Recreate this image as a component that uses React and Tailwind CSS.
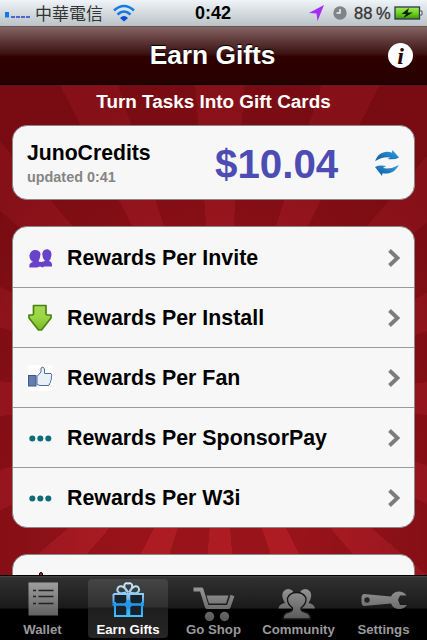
import React, { useState } from 'react';

const InviteIcon = () => (
  <svg className="w-[26px] h-[26px]" viewBox="0 0 26 26" fill="#6842c8">
    <path d="M2.500 22.500 Q1.500 18 6 17 Q2 14 2.500 10 Q4 4.500 9 5 Q13 5.500 13.500 9 Q13 14 11.500 16.500 L14.500 17 L18 16 Q14.500 12 15.500 7.500 Q17 4 20.500 4.200 Q24.500 5 24.500 10 Q24 14 22 16 Q25.500 17 25 21.500 L17 21.500 L16 22.500 L13 21.500 L10 22.500 Z" />
  </svg>
);

const InstallIcon = () => (
  <svg className="w-[26px] h-[28px]" viewBox="0 0 26 28">
    <defs>
      <linearGradient id="arrow" x1="0" y1="0" x2="0" y2="1">
        <stop offset="0" stopColor="#a2d950" />
        <stop offset=".5" stopColor="#9bd444" />
        <stop offset="1" stopColor="#76bb27" />
      </linearGradient>
    </defs>
    <path d="M6.500 1.500 H19 V10 L20 11 H24 V14 L14.500 26 H11.500 L2 14 V11 H5.500 L6.500 10 Z" fill="url(#arrow)" stroke="#4a8410" strokeWidth="1.700" strokeLinejoin="round" />
  </svg>
);

const FanIcon = () => (
  <svg className="w-[26px] h-[26px]" viewBox="0 0 26 26">
    <rect width="26" height="26" rx="4" fill="#fff" />
    <rect x="1.500" y="10.500" width="7.500" height="10.500" fill="#647cb0" stroke="#3f568e" />
    <path d="M10 11.500 L14 7 V3 Q16 .5 17.500 4 V8.500 H24 Q25.500 10 24.300 12 Q25 14 23.700 15.500 Q24 17.500 22.700 18.500 Q22.500 20.500 21 20.500 H13 L10 19.500 Z" fill="#e9f0f8" stroke="#526b9d" strokeLinejoin="round" />
  </svg>
);

const DotsIcon = () => (
  <svg className="w-[26px] h-[26px]" viewBox="0 0 26 26" fill="#0d6c79">
    <circle cx="5.300" cy="13.500" r="3" />
    <circle cx="13.300" cy="13.500" r="3" />
    <circle cx="21.300" cy="13.500" r="3" />
  </svg>
);

const RefreshIcon = () => (
  <svg className="w-[26px] h-[28px]" viewBox="0 0 26 28">
    <defs>
      <linearGradient id="sync" x1="0" y1="1" x2="1" y2="0">
        <stop offset="0" stopColor="#11549e" />
        <stop offset="1" stopColor="#32a4e0" />
      </linearGradient>
    </defs>
    <path d="M1 12 Q4 4 11 3 Q15 2.300 18 3.800 L18.500 1 L25 8.500 Q21 11.200 13.500 10 L16.500 8.500 Q9 7 1 12 Z" fill="url(#sync)" />
    <path d="M25 16 Q21 23 15 24.200 Q12 25 8.500 24.200 L8 27 L1 18 Q5 15.800 12 17 L9 19 Q17 20.500 25 16 Z" fill="url(#sync)" />
  </svg>
);

const WalletIcon = () => (
  <svg className="w-11 h-10" viewBox="0 0 44 40">
    <path d="M7.500 4.500 H37 V37.500 H7.500 Z" fill="url(#gray)" />
    <g stroke="#222" strokeWidth="1.700">
      <path d="M12 12.500 h3 M17.500 12.500 h15 M12 18.500 h3 M17.500 18.500 h15 M12 25.500 h3 M17.500 25.500 h15" />
    </g>
  </svg>
);

const GiftIcon = () => (
  <svg className="w-11 h-10" viewBox="0 0 44 40">
    <defs>
      <linearGradient id="blue" x1="0" y1="0" x2="0" y2="40" gradientUnits="userSpaceOnUse">
        <stop offset=".1" stopColor="#d9eeff" />
        <stop offset=".5" stopColor="#78bdf0" />
        <stop offset=".65" stopColor="#1b9af0" />
        <stop offset="1" stopColor="#49c6ff" />
      </linearGradient>
    </defs>
    <path d="M8 16 H37 V38 H8 Z" fill="#17222b" />
    <g fill="none" stroke="url(#blue)">
      <path d="M20 14.500 C13 17 9.500 13 12.500 9 C16 7 20 10 22 14.500 C16 8 18.500 4 22 5.500 C26 4 28.500 8 23 14.500 C25 10 29 7 32 9 C35 13 31 17 24 14.500" strokeWidth="2" />
      <path d="M7.500 16 H37 V25 M7.500 16 V25" strokeWidth="2" />
      <path d="M9 24 V38 H36 V24" strokeWidth="2" />
      <path d="M6.500 26.500 H38" strokeWidth="2.500" />
      <path d="M22.300 15 V38" strokeWidth="4" />
    </g>
    <path d="M22.300 21.500 L27 26.500 L22.300 31.500 L17.500 26.500 Z" fill="#2795e5" />
  </svg>
);

const CartIcon = () => (
  <svg className="w-11 h-10" viewBox="0 0 44 40">
    <path d="M1.500 11.500 H9.500 L15 29 H36.500 L40.500 17.500" fill="none" stroke="url(#gray)" strokeWidth="4" strokeLinejoin="round" />
    <path d="M14.500 17.500 H36.500 L34 25.500 H17 Z" fill="url(#gray)" />
    <circle cx="17.500" cy="38.500" r="4.700" fill="url(#gray)" />
    <circle cx="32.500" cy="38.500" r="4.700" fill="url(#gray)" />
  </svg>
);

const CommunityIcon = () => (
  <svg className="w-11 h-10" viewBox="0 0 44 40" fill="url(#gray)">
    <path d="M1.500 30.500 Q2 26 8 25 Q4 19 6 14 Q10 8.500 16 13 L15 30.500 Z" />
    <path d="M38 30.500 Q37.500 26 31.500 25 Q35.500 19 33.500 14 Q29.500 8.500 23.500 13 L24.500 30.500 Z" />
    <path d="M6 41 Q6 35 12 34 Q16 33 15.500 30 Q10 26 10.500 20 Q13 14.500 19.500 14.500 Q26.500 14.500 29 20 Q29.500 26 24 30 Q23.500 33 27.500 34 Q33.500 35 33.500 41 Z" stroke="#151515" strokeWidth="1.300" />
  </svg>
);

const SettingsIcon = () => (
  <svg className="w-[48px] h-10" viewBox="0 0 48 40">
    <path d="M4 16 Q1 16.500 1.500 22 Q1 27.500 4 28 L31 25.500 Q33 31 40 31 Q45 30.500 46.800 27 H40 L38 22 L40 17.500 H46.500 Q44 13.500 38.500 13.500 Q33 14 31 18.500 Z" fill="url(#gray)" />
    <circle cx="7" cy="22" r="2.700" fill="#222" />
  </svg>
);

const rewards = [
  { name: 'Rewards Per Invite', icon: <InviteIcon /> },
  { name: 'Rewards Per Install', icon: <InstallIcon /> },
  { name: 'Rewards Per Fan', icon: <FanIcon /> },
  { name: 'Rewards Per SponsorPay', icon: <DotsIcon /> },
  { name: 'Rewards Per W3i', icon: <DotsIcon /> },
];

const tabs = [
  { name: 'Wallet', icon: <WalletIcon /> },
  { name: 'Earn Gifts', icon: <GiftIcon /> },
  { name: 'Go Shop', icon: <CartIcon /> },
  { name: 'Community', icon: <CommunityIcon /> },
  { name: 'Settings', icon: <SettingsIcon /> },
];

const StatusBar = () => (
  <div className="h-[26px] shrink-0 flex items-center bg-linear-to-b from-[#eef4f7] to-[#bbc3c6] text-[#333]">
    <svg className="w-[26px] h-3 ml-[5px] mt-[9px]" viewBox="0 0 26 12">
      <path d="M0 0 h4 v5.500 h-4 z" fill="#087df0" />
      <path d="M6 5 h4 M11 5 h4 M16 5 h4 M21 5 h4" stroke="#2540d5" strokeWidth="1.500" />
    </svg>
    <span className="ml-1 w-[68px] text-[17px] leading-[26px] whitespace-nowrap font-['Noto_Sans_CJK_TC',sans-serif]">中華電信</span>
    <svg className="w-[22px] h-[18px] ml-[10px]" viewBox="0 0 22 18" fill="none" stroke="#147be5" strokeWidth="2.600">
      <path d="M1 6.500 Q11 -2.500 21 6.500" />
      <path d="M4.500 10.500 Q11 4.500 17.500 10.500" />
      <path d="M7 14 Q11 10 15 14 L11 17.500 Z" fill="#064ed8" stroke="none" />
    </svg>
    <span className="ml-[60px] w-9 text-[18px] leading-[26px] font-bold text-black">0:42</span>
    <svg className="w-[17px] h-[18px] ml-[77px]" viewBox="0 0 17 18">
      <path d="M1 9 L16 1 L9.500 17 L8.500 9.500 Z" fill="#a32df0" />
    </svg>
    <svg className="w-[14px] h-[14px] ml-2" viewBox="0 0 14 14">
      <circle cx="7" cy="7" r="6.700" fill="#7e8589" />
      <path d="M7 3 V7 H3.500" fill="none" stroke="#edf2f4" strokeWidth="1.500" />
    </svg>
    <span className="ml-[7px] w-[40px] text-[16.500px] leading-[26px] whitespace-nowrap [word-spacing:-1px] [-webkit-text-stroke:0.3px_#333]">88 %</span>
    <svg className="w-[29px] h-[14px]" viewBox="0 0 29 14">
      <defs>
        <linearGradient id="battery" x1="0" y1="0" x2="0" y2="1">
          <stop offset="0" stopColor="#a6e75a" />
          <stop offset=".5" stopColor="#6ed51d" />
          <stop offset="1" stopColor="#379707" />
        </linearGradient>
      </defs>
      <rect x="1" y="1" width="24.500" height="12" fill="url(#battery)" stroke="#303552" strokeWidth="1.300" />
      <path d="M26 5 h2 v4 h-2" fill="#dfe6e9" stroke="#4d556a" />
      <path d="M15 2 L7.500 8 H12 L9.500 12 L19 6.500 H13.500 Z" fill="#101d0a" />
    </svg>
  </div>
);

const Chevron = () => (
  <svg className="w-3 h-[18px]" viewBox="0 0 12 18">
    <path d="M1.500 1.500 L9.500 9 L1.500 16.500" fill="none" stroke="#7c7c7c" strokeWidth="3.900" />
  </svg>
);

const App = () => {
  const [activeTab, setActiveTab] = useState('Earn Gifts');

  return (
    <div className="w-[427px] h-[640px] flex flex-col overflow-hidden bg-black font-['Liberation_Sans',Arial,sans-serif]">
      {/* Shared fill of the inactive tab icons */}
      <svg className="absolute w-0 h-0">
        <defs>
          <linearGradient id="gray" x1="0" y1="0" x2="0" y2="40" gradientUnits="userSpaceOnUse">
            <stop offset=".1" stopColor="#a0a0a0" />
            <stop offset="1" stopColor="#5c5c5c" />
          </linearGradient>
        </defs>
      </svg>

      <StatusBar />

      {/* Title bar */}
      <div className="h-[59px] shrink-0 grid grid-cols-[1fr_auto_1fr] items-center border-t border-b border-t-[#665252] border-b-black bg-[linear-gradient(#856565_0%,#613c3c_22%,#3c1010_48%,#300000_52%,#250000_100%)]">
        <h1 className="col-start-2 mr-[2px] text-[26.3px] leading-8 pb-[2px] font-bold text-white [text-shadow:0_-1px_1px_#000]">Earn Gifts</h1>
        <button className="justify-self-end mr-[14px] w-[25px] h-[25px] rounded-full bg-white flex items-center justify-center text-[#2a0505] font-['Liberation_Serif',serif] text-[24px] leading-none font-bold italic">i</button>
      </div>

      {/* Content */}
      <div className="h-[490px] shrink-0 overflow-hidden px-3 bg-[radial-gradient(ellipse_70%_90%_at_50%_90%,transparent_30%,#4a000866_100%),repeating-conic-gradient(from_-4.5deg_at_51.5%_64%,#ad1b23_0deg_9deg,#98131a_9deg_22.5deg)]">
        <h2 className="h-10 pt-[5px] text-center text-[18.9px] leading-6 font-bold text-white">Turn Tasks Into Gift Cards</h2>

        <div className="w-[403px] h-[75px] flex items-center rounded-[15px] border border-[#888] bg-[#f7f7f7] pl-[14px] pr-3">
          <div className="w-[188px] pt-[3px]">
            <div className="text-[21.2px] leading-6 font-bold text-black">JunoCredits</div>
            <div className="text-[14.4px] leading-5 mt-[2px] font-bold text-[#858585]">updated 0:41</div>
          </div>
          <div className="pt-[4px] text-[40.3px] leading-[44px] font-bold text-[#4d4cb4]">$10.04</div>
          <div className="ml-auto mr-[2px]"><RefreshIcon /></div>
        </div>

        <div className="w-[403px] mt-[26px] rounded-[15px] border border-[#888] bg-[#f7f7f7]">
          {rewards.map((reward) => (
            <div key={reward.name} className="h-[60px] flex items-center px-[14px] border-t border-[#999] first:border-transparent">
              <div className="w-[40px]">{reward.icon}</div>
              <span className="pt-[1px] text-[21.37px] leading-7 font-bold text-black">{reward.name}</span>
              <div className="ml-auto"><Chevron /></div>
            </div>
          ))}
        </div>

        <div className="w-[403px] h-[60px] mt-[26px] rounded-[15px] border border-[#888] bg-[#f7f7f7] pl-[26px] pt-[17px]">
          <div className="w-1 h-2 rounded-full border border-black bg-[#d41d18]"></div>
        </div>
      </div>

      {/* Tab bar */}
      <div className="h-[65px] shrink-0 flex border-t border-black bg-[linear-gradient(#484848_0px,#303030_2px,#1a1a1a_32px,#000_33px)]">
        {tabs.map((tab) => (
          <button
            key={tab.name}
            onClick={() => setActiveTab(tab.name)}
            className={`mt-[3px] h-[59px] flex flex-col items-center rounded ${
              activeTab === tab.name
                ? 'w-[80px] mx-[3px] text-white bg-[linear-gradient(#454545,#303030_28px,#1e1e1e_29px,#262626)]'
                : 'w-[85px] text-[#999]'
            }`}
          >
            <div className="h-[44px] -mt-px [&>svg]:overflow-visible">{tab.icon}</div>
            <span className="mt-px text-[13.2px] leading-4 font-bold whitespace-nowrap">{tab.name}</span>
          </button>
        ))}
      </div>
    </div>
  );
};

export default App;
